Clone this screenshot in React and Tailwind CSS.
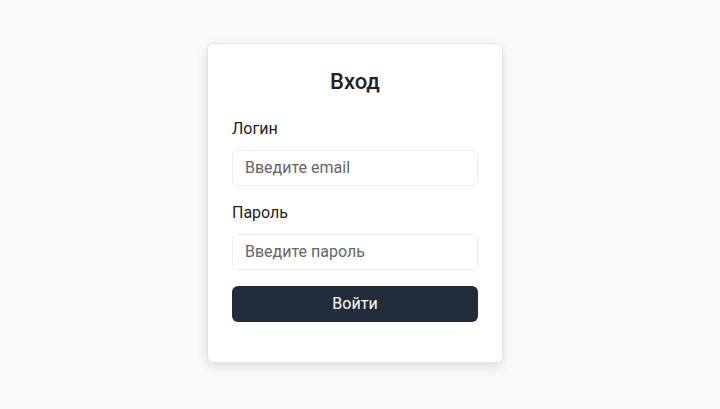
import React from 'react';

export default function App() {
  return (
    <div className="min-h-screen bg-[#fafafa] flex items-center justify-center pr-[10px] pb-[4px] font-['Roboto',sans-serif]">
      <div className="w-[296px] bg-white border border-[#e4e4e4] rounded-md shadow-[0_4px_12px_rgba(0,0,0,0.12)] px-6 pt-6 pb-[40px] text-[#222]">
        <h1 className="text-[22px] leading-7 font-medium text-center mb-[21px]">Вход</h1>

        <label className="block text-base leading-6 mb-[9px]">Логин</label>
        <input
          type="email"
          placeholder="Введите email"
          className="w-full h-9 px-3 text-base border border-[#eeeeee] rounded-md bg-white placeholder:text-[#666] outline-none mb-[15px]"
        />

        <label className="block text-base leading-6 mb-[9px]">Пароль</label>
        <input
          type="password"
          placeholder="Введите пароль"
          className="w-full h-9 px-3 text-base border border-[#eeeeee] rounded-md bg-white placeholder:text-[#666] outline-none mb-4"
        />

        <button className="w-full h-9 rounded-md bg-[#222d3b] text-white text-base">Войти</button>
      </div>
    </div>
  );
}
